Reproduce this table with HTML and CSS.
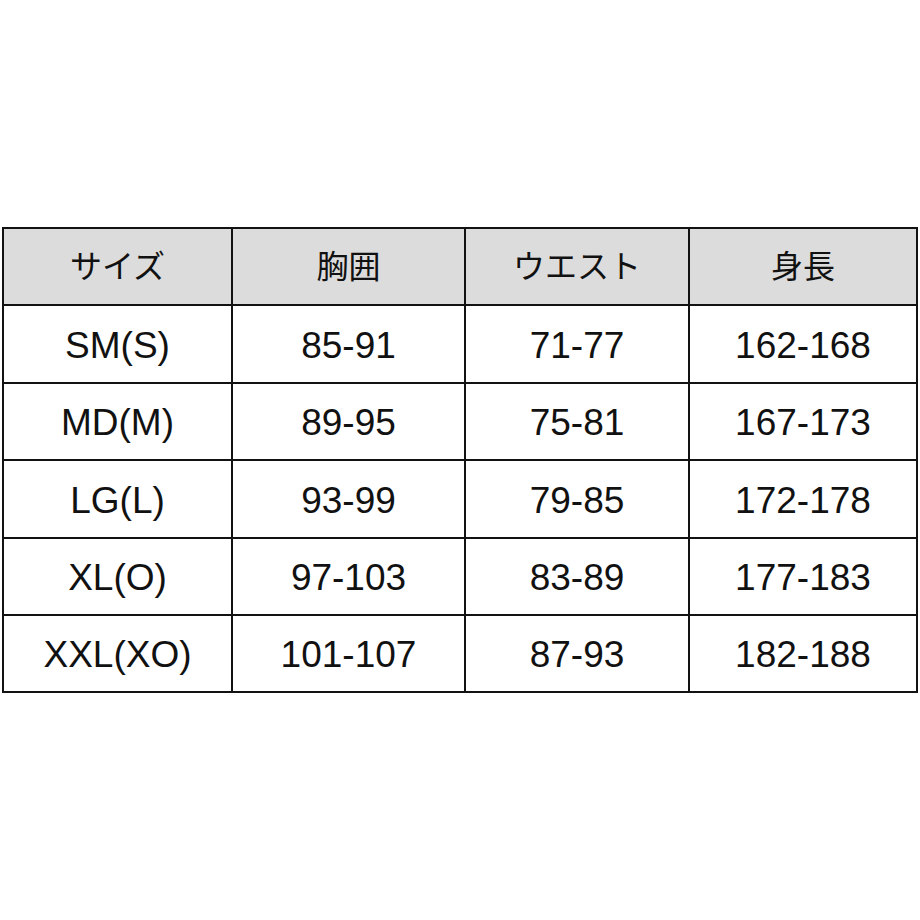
FILE: index.html
```html
<!DOCTYPE html>
<html lang="ja">
<head>
<meta charset="utf-8">
<title>サイズ表</title>
<link rel="stylesheet" href="styles.css">
</head>
<body>
<div class="page">
  <div class="size-table">
    <div class="cell head">サイズ</div>
    <div class="cell head">胸囲</div>
    <div class="cell head">ウエスト</div>
    <div class="cell head">身長</div>

    <div class="cell">SM(S)</div>
    <div class="cell">85-91</div>
    <div class="cell">71-77</div>
    <div class="cell">162-168</div>

    <div class="cell">MD(M)</div>
    <div class="cell">89-95</div>
    <div class="cell">75-81</div>
    <div class="cell">167-173</div>

    <div class="cell">LG(L)</div>
    <div class="cell">93-99</div>
    <div class="cell">79-85</div>
    <div class="cell">172-178</div>

    <div class="cell">XL(O)</div>
    <div class="cell">97-103</div>
    <div class="cell">83-89</div>
    <div class="cell">177-183</div>

    <div class="cell">XXL(XO)</div>
    <div class="cell">101-107</div>
    <div class="cell">87-93</div>
    <div class="cell">182-188</div>
  </div>
</div>
</body>
</html>
```
FILE: styles.css
```css
html, body {
  margin: 0;
  padding: 0;
  background: #ffffff;
}

.page {
  width: 920px;
  height: 920px;
  padding: 227px 0 0 2px;
  box-sizing: border-box;
}

.size-table {
  display: grid;
  width: 916px;
  box-sizing: border-box;
  grid-template-columns: 227px 231px 222px 226px;
  grid-template-rows: 75px 76px 75px 76px 75px 75px;
  gap: 2px;
  padding: 2px;
  background: #121212;
}

.cell {
  display: flex;
  align-items: center;
  justify-content: center;
  background: #ffffff;
  color: #111111;
  font-family: "Liberation Sans", "Noto Sans CJK JP", sans-serif;
  font-size: 37px;
  line-height: 1;
  padding-top: 2px;
  box-sizing: border-box;
}

.cell.head {
  background: #dcdcdc;
  font-family: "Noto Sans CJK JP", "Liberation Sans", sans-serif;
  font-size: 32px;
  padding-top: 0;
  padding-bottom: 6px;
}
```
